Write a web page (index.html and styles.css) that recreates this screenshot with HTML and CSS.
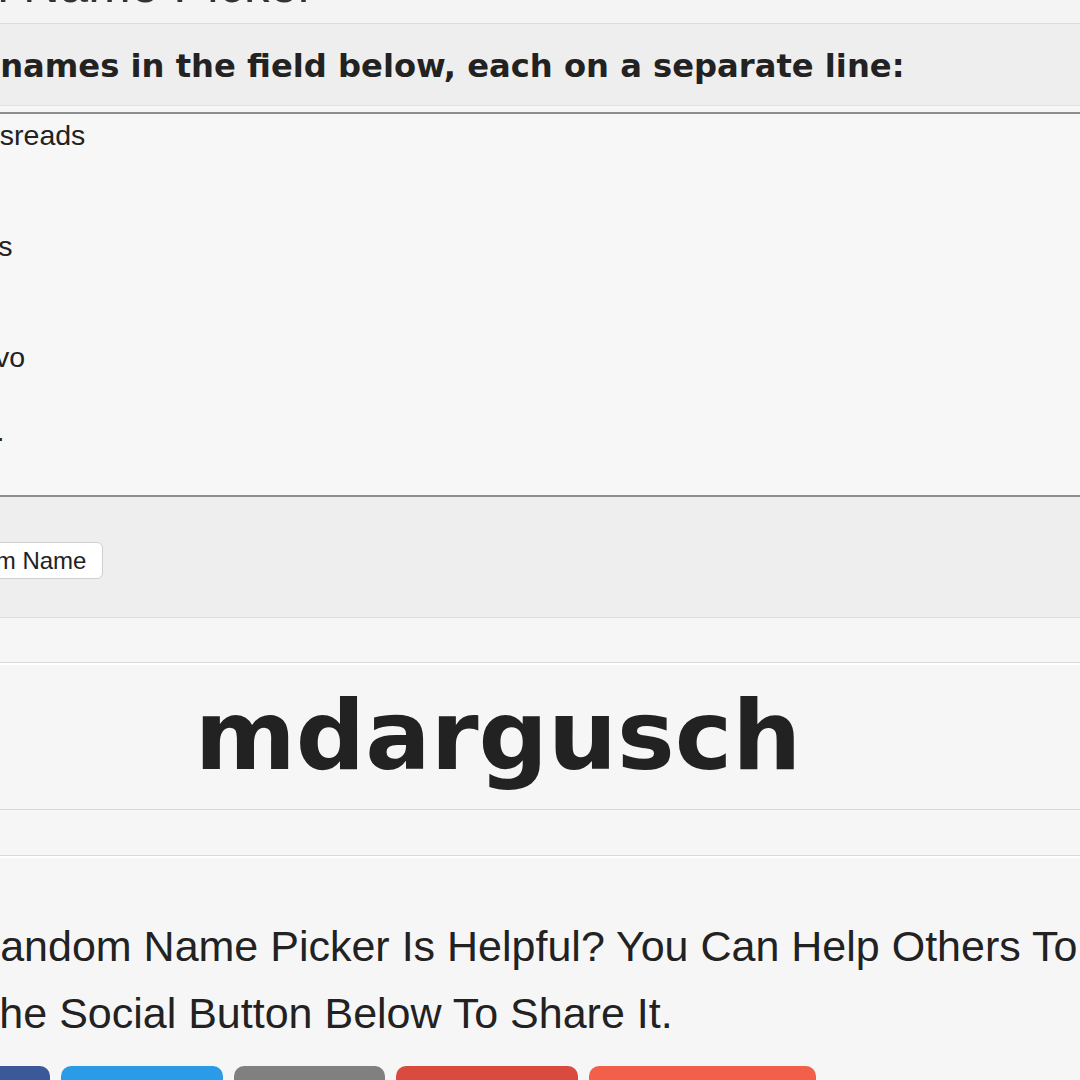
FILE: index.html
```html
<!DOCTYPE html>
<html lang="en">
<head>
  <meta charset="UTF-8">
  <meta name="viewport" content="width=device-width, initial-scale=1.0">
  <title>Random Name Picker</title>
  <link rel="stylesheet" href="styles.css">
</head>
<body>
  <div class="page">
    <h1 class="title">Random Name Picker</h1>

    <div class="panel">
      <div class="panel-heading">Enter names in the field below, each on a separate line:</div>
      <textarea class="names" spellcheck="false">Danielsreads
Ana
Tom
Marcus
Eva
Bob
Gustavo
Lea
Alex J.</textarea>
      <div class="panel-footer">
        <button class="pick">Pick Random Name</button>
      </div>
    </div>

    <div class="result">mdargusch</div>
    <div class="divider"></div>

    <p class="share-text">Think Random Name Picker Is Helpful? You Can Help Others To Find It.<br>Press The Social Button Below To Share It.</p>

    <div class="share">
      <a class="share-btn facebook">Facebook</a>
      <a class="share-btn twitter">Twitter</a>
      <a class="share-btn email">Email</a>
      <a class="share-btn google">Google+</a>
      <a class="share-btn reddit">Reddit</a>
    </div>
  </div>
</body>
</html>
```

FILE: styles.css
```css
html, body { margin: 0; overflow: hidden; background: #f6f6f6; }
body { font-family: "Liberation Sans", Arial, sans-serif; color: #222; }

.page { margin: -41px 0 0 -200px; width: 1396px; }

.title { margin: 0; padding: 0 0 13px 16px; font-size: 51px; font-weight: normal; line-height: 51px; color: #333; background: #f4f4f4; border-bottom: 1px solid #dcdcdc; }

.panel-heading { padding: 23px 0 20px 91px; background: #eee; border-bottom: 1px solid #e2e2e2; font-family: "DejaVu Sans", Verdana, sans-serif; font-weight: bold; font-size: 32.2px; line-height: 38px; color: #222; }

.names { display: block; box-sizing: border-box; margin: 6px 0 0 106px; width: calc(100% - 106px); height: 385px; padding: 3px 12px; border: 1px solid #bbb; border-top: 2px solid #8e8e8e; border-bottom: 2px solid #8e8e8e; background: #f7f7f7; font-family: "Liberation Sans", Arial, sans-serif; font-size: 28.5px; line-height: 37px; color: #222; resize: none; outline: none; overflow: hidden; }

.panel-footer { padding: 45px 0 38px 58px; background: #eee; border-bottom: 1px solid #dcdcdc; }
.pick { box-sizing: border-box; height: 37px; padding: 0 16px 0 14px; border: 1px solid #cfcfcf; border-radius: 6px; background: #fff; font-family: "Liberation Sans", Arial, sans-serif; font-size: 24px; color: #222; }

.result { margin-top: 44px; height: 146px; border-top: 1px solid #d9d9d9; border-bottom: 1px solid #d9d9d9; box-shadow: inset 0 2px 0 #fff; text-align: center; font-family: "DejaVu Sans", Verdana, sans-serif; font-weight: bold; font-size: 97px; line-height: 146px; color: #222; }

.divider { margin-top: 45px; border-top: 1px solid #d9d9d9; border-bottom: 2px solid #fff; }

.share-text { margin: 55px 0 0; padding-left: 52px; font-size: 43px; line-height: 67px; color: #222; white-space: nowrap; }

.share { display: flex; gap: 11px; margin: 19px 0 0 100px; }
.share-btn { display: block; height: 52px; border-radius: 10px 10px 0 0; color: #fff; font-size: 22px; line-height: 70px; text-align: center; }
.facebook { width: 150px; background: #3b5998; }
.twitter { width: 162px; background: #2a9be6; }
.email { width: 151px; background: #808080; }
.google { width: 182px; background: #d84b3e; }
.reddit { width: 227px; background: #f26049; }
```
